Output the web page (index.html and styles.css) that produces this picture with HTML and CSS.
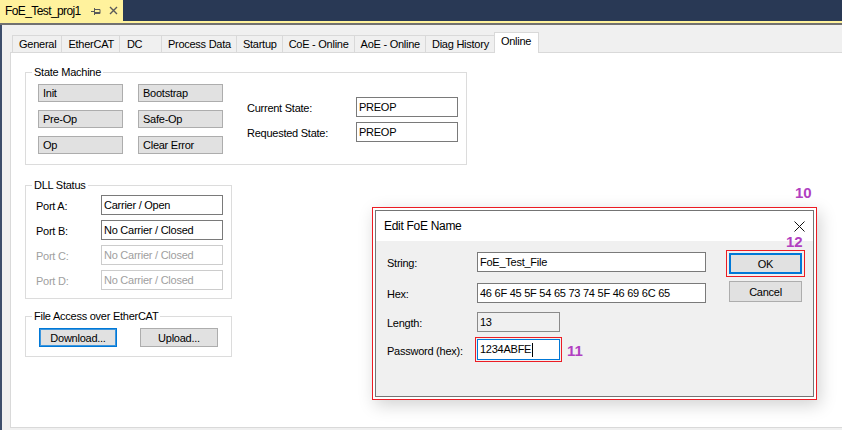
FILE: index.html
```html
<!DOCTYPE html>
<html>
<head>
<meta charset="utf-8">
<link rel="stylesheet" href="styles.css">
</head>
<body>
<header class="doc-bar">
  <div class="doc-tab">
    <span class="doc-title">FoE_Test_proj1</span>
    <svg class="pin" width="10" height="8" viewBox="0 0 10 8"><path d="M0 4.5h3M3.5 1v7M3.5 2.5h5.5v4h-5.5M3.5 5.5h5.5" stroke="#5a5a5a" stroke-width="1" fill="none"/></svg>
    <svg class="doc-close" width="9" height="9" viewBox="0 0 9 9"><path d="M1 1l7 7M8 1l-7 7" stroke="#5a5a5a" stroke-width="1.4" fill="none"/></svg>
  </div>
</header>
<div class="doc-line"></div>
<main class="main">
  <nav class="tabs">
    <div class="tab">General</div>
    <div class="tab">EtherCAT</div>
    <div class="tab tab-dc">DC</div>
    <div class="tab">Process Data</div>
    <div class="tab">Startup</div>
    <div class="tab">CoE - Online</div>
    <div class="tab">AoE - Online</div>
    <div class="tab">Diag History</div>
    <div class="tab active">Online</div>
  </nav>
  <section class="panel">
    <fieldset class="group sm">
      <legend>State Machine</legend>
      <div class="sm-body">
        <div class="sm-buttons">
          <div class="btn btn-left">Init</div>
          <div class="btn btn-left">Bootstrap</div>
          <div class="btn btn-left">Pre-Op</div>
          <div class="btn btn-left">Safe-Op</div>
          <div class="btn btn-left">Op</div>
          <div class="btn btn-left">Clear Error</div>
        </div>
        <div class="state-grid">
          <span class="lbl">Current State:</span><div class="field">PREOP</div>
          <span class="lbl">Requested State:</span><div class="field">PREOP</div>
        </div>
      </div>
    </fieldset>
    <fieldset class="group dll">
      <legend>DLL Status</legend>
      <div class="port-grid">
        <span class="lbl">Port A:</span><div class="field">Carrier / Open</div>
        <span class="lbl">Port B:</span><div class="field">No Carrier / Closed</div>
        <span class="lbl dis">Port C:</span><div class="field field-dis">No Carrier / Closed</div>
        <span class="lbl dis">Port D:</span><div class="field field-dis">No Carrier / Closed</div>
      </div>
    </fieldset>
    <fieldset class="group foe">
      <legend>File Access over EtherCAT</legend>
      <div class="foe-buttons">
        <div class="btn btn-wide btn-focus">Download...</div>
        <div class="btn btn-wide">Upload...</div>
      </div>
    </fieldset>
  </section>
</main>

<div class="dialog-mark">
  <div class="dialog">
    <div class="dlg-title">
      <span>Edit FoE Name</span>
      <svg class="dlg-close" width="11" height="11" viewBox="0 0 11 11"><path d="M0.5 0.5l10 10M10.5 0.5l-10 10" stroke="#111" stroke-width="1" fill="none"/></svg>
    </div>
    <div class="dlg-body">
      <div class="form">
        <div class="frow"><span class="flbl">String:</span><div class="field f-long">FoE_Test_File</div></div>
        <div class="frow r-hex"><span class="flbl">Hex:</span><div class="field f-long">46 6F 45 5F 54 65 73 74 5F 46 69 6C 65</div></div>
        <div class="frow r-len"><span class="flbl">Length:</span><div class="field f-short f-ro">13</div></div>
        <div class="frow r-pw"><span class="flbl">Password (hex):</span><div class="field f-short f-active">1234ABFE<span class="caret"></span></div></div>
      </div>
      <div class="dlg-buttons">
        <div class="btn btn-dlg btn-ok">OK</div>
        <div class="btn btn-dlg">Cancel</div>
      </div>
    </div>
  </div>
</div>
<span class="anno a10">10</span>
<span class="anno a12">12</span>
<span class="anno a11">11</span>
</body>
</html>
```

FILE: styles.css
```css
html, body {
  margin: 0;
  padding: 0;
}
body {
  width: 842px;
  height: 430px;
  overflow: hidden;
  position: relative;
  background: #f0f0f0;
  font: 11px "Liberation Sans", Arial, sans-serif;
  color: #000;
  letter-spacing: -0.25px;
}

/* document tab bar */
.doc-bar {
  height: 21px;
  background: #293955;
  display: flex;
}
.doc-tab {
  width: 123px;
  background: #fff29d;
  display: flex;
  align-items: center;
  padding-left: 5px;
  box-sizing: border-box;
}
.doc-title {
  font-size: 12px;
  letter-spacing: -0.6px;
  padding-top: 1px;
}
.pin {
  margin-left: 10px;
}
.doc-close {
  margin-left: 8px;
}
.doc-line {
  height: 2px;
  background: #fff29d;
  border-bottom: 2px solid #717171;
}

/* main area */
.main {
  height: 405px;
  box-sizing: border-box;
  border-left: 2px solid #3d4e6b;
  padding: 7px 0 0 8px;
}
.tabs {
  display: flex;
  align-items: flex-end;
  height: 20px;
  padding-left: 2px;
  position: relative;
  z-index: 1;
}
.tab {
  height: 17px;
  box-sizing: border-box;
  border: 1px solid #d9d9d9;
  border-bottom: none;
  margin-left: -1px;
  padding: 0 5px 0 6px;
  line-height: 16px;
  white-space: nowrap;
}
.tab:first-child {
  margin-left: 0;
}
.tab-dc {
  min-width: 43px;
  padding-left: 7px;
}
.tab.active {
  height: 21px;
  margin-bottom: -1px;
  background: #fff;
  line-height: 17px;
  padding-bottom: 3px;
  padding-right: 7px;
}
.panel {
  height: 376px;
  box-sizing: border-box;
  background: #fff;
  border: 1px solid #d9d9d9;
  border-right: none;
  padding: 13px 0 0 14px;
}

/* group boxes */
.group {
  margin: 0;
  border: 1px solid #dcdcdc;
  padding: 0 8px 9px 6px;
  box-sizing: border-box;
}
.group legend {
  padding: 0 2px;
  line-height: 13px;
  height: 13px;
}
.sm {
  width: 442px;
  padding-bottom: 10px;
}
.sm-body {
  display: flex;
  align-items: center;
  padding: 5px 0 0 6px;
}
.sm-buttons {
  display: grid;
  grid-template-columns: 85px 85px;
  grid-auto-rows: 18px;
  column-gap: 15px;
  row-gap: 8px;
}
.state-grid {
  margin-left: 24px;
  display: grid;
  grid-template-columns: 109px 102px;
  grid-auto-rows: 20px;
  row-gap: 5px;
  align-items: center;
}
.lbl {
  padding-top: 2px;
}
.dis {
  color: #a0a0a0;
}

.dll {
  width: 207px;
  margin-top: 14px;
  padding-bottom: 8px;
}
.port-grid {
  display: grid;
  grid-template-columns: 65px 122px;
  grid-auto-rows: 20px;
  row-gap: 5px;
  align-items: center;
  padding: 3px 0 0 4px;
}

.foe {
  width: 207px;
  margin-top: 11px;
  padding-bottom: 9px;
}
.foe-buttons {
  display: flex;
  gap: 23px;
  padding: 5px 0 0 7px;
}

/* controls */
.btn {
  box-sizing: border-box;
  background: #e1e1e1;
  border: 1px solid #adadad;
  display: flex;
  align-items: center;
  justify-content: center;
  white-space: nowrap;
}
.btn-left {
  justify-content: flex-start;
  padding-left: 4px;
  height: 18px;
}
.btn-wide {
  width: 78px;
  height: 19px;
}
.btn-focus {
  border-color: #0078d7;
  box-shadow: inset 0 0 0 1px #3d96dd;
}
.field {
  height: 20px;
  box-sizing: border-box;
  border: 1px solid #7a7a7a;
  background: #fff;
  padding-left: 2px;
  line-height: 18px;
  white-space: nowrap;
  overflow: hidden;
}
.field-dis {
  border-color: #cccccc;
  color: #a0a0a0;
}

/* dialog */
.dialog-mark {
  position: absolute;
  left: 372px;
  top: 207px;
  width: 445px;
  height: 193px;
  box-sizing: border-box;
  border: 1px solid #ec1c24;
  padding: 2px;
  background: #fff;
  box-shadow: 3px 5px 16px rgba(0, 0, 0, 0.18);
}
.dialog {
  height: 100%;
  box-sizing: border-box;
  border: 1px solid #747474;
  display: flex;
  flex-direction: column;
}
.dlg-title {
  height: 30px;
  background: #fff;
  display: flex;
  align-items: center;
  justify-content: space-between;
  padding: 0 8px 0 8px;
  font-size: 12px;
  letter-spacing: -0.3px;
}
.dlg-body {
  flex: 1;
  background: #f0f0f0;
  display: flex;
  padding: 11px 0 0 11px;
}
.form {
  display: flex;
  flex-direction: column;
}
.frow {
  display: flex;
  align-items: center;
  height: 20px;
}
.r-hex { margin-top: 11px; }
.r-len { margin-top: 9px; }
.r-pw { margin-top: 7px; height: 21px; }
.flbl {
  width: 90px;
  padding-top: 2px;
}
.f-long {
  width: 229px;
}
.f-short {
  width: 83px;
}
.f-ro {
  background: #f0f0f0;
  border-color: #8a8a8a;
}
.f-active {
  height: 21px;
  border-color: #0078d7;
  outline: 1px solid #ec1c24;
  outline-offset: 1px;
  line-height: 19px;
  display: flex;
  align-items: center;
}
.caret {
  display: inline-block;
  width: 1px;
  height: 14px;
  background: #000;
  margin-left: 1px;
}
.dlg-buttons {
  margin-left: 23px;
  margin-top: 1px;
  display: flex;
  flex-direction: column;
  gap: 7px;
}
.btn-dlg {
  width: 73px;
  height: 21px;
}
.btn-ok {
  border: 2px solid #0078d7;
  outline: 1px solid #ec1c24;
  outline-offset: 2px;
}

/* annotations */
.anno {
  position: absolute;
  font: bold 15px/15px "Liberation Sans", Arial, sans-serif;
  color: #b13fc1;
  letter-spacing: 0;
}
.a10 { left: 795px; top: 185px; }
.a12 { left: 786px; top: 234px; }
.a11 { left: 567px; top: 343px; }
```
